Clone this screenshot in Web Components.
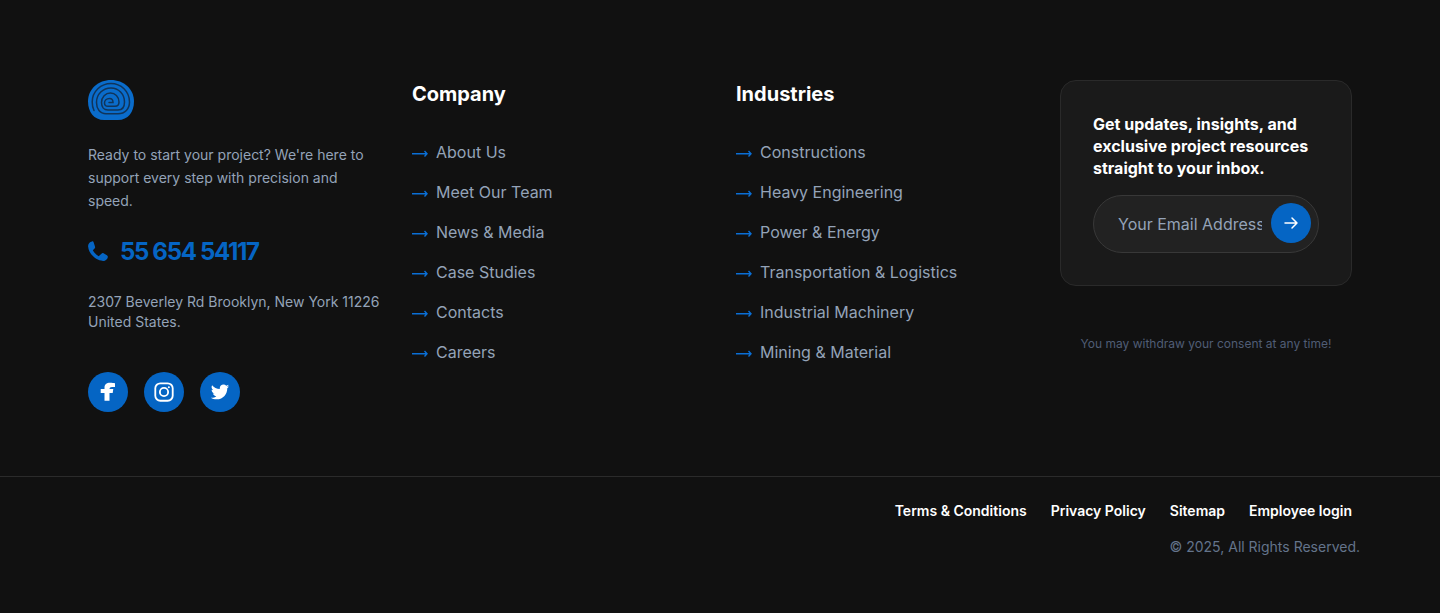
<!DOCTYPE html>
<html lang="en">
<head>
<meta charset="UTF-8">
<title>Footer</title>
<style>
  html, body { margin: 0; background: #111111; }
  body { font-family: Inter, "Liberation Sans", sans-serif; }
</style>
</head>
<body>
<site-footer>
  <footer-about slot="about"></footer-about>
  <link-list slot="company" heading="Company" items="About Us|Meet Our Team|News &amp; Media|Case Studies|Contacts|Careers"></link-list>
  <link-list slot="industries" heading="Industries" items="Constructions|Heavy Engineering|Power &amp; Energy|Transportation &amp; Logistics|Industrial Machinery|Mining &amp; Material"></link-list>
  <subscribe-card slot="subscribe"></subscribe-card>
  <footer-bottom slot="bottom"></footer-bottom>
</site-footer>

<template id="site-footer">
  <style>
    :host { display: block; height: 613px; background: #111111; box-sizing: border-box; padding-top: 80px; overflow: hidden; }
    .cols { display: grid; grid-template-columns: repeat(4, 292px); column-gap: 32px; padding: 0 88px; height: 396px; }
    .bottom { border-top: 1px solid #2b2b2b; }
  </style>
  <div class="cols">
    <slot name="about"></slot>
    <slot name="company"></slot>
    <slot name="industries"></slot>
    <slot name="subscribe"></slot>
  </div>
  <div class="bottom"><slot name="bottom"></slot></div>
</template>

<template id="footer-about">
  <style>
    :host { display: block; }
    svg { display: block; }
    .logo { width: 46px; height: 40px; }
    p { margin: 0; }
    .intro { margin-top: 23px; font-size: 14px; line-height: 23px; color: #94a3b8; }
    .phone { display: flex; align-items: center; gap: 11px; margin-top: 21px; height: 36px; color: #0565c4; }
    .phone svg { width: 22px; height: 22px; margin-left: -1px; fill: currentColor; }
    .phone span { font-size: 24px; font-weight: 700; letter-spacing: -1.33px; }
    .addr { margin-top: 23px; font-size: 14px; line-height: 20px; color: #94a3b8; }
    .social { display: flex; gap: 16px; margin-top: 40px; }
    .social a { width: 40px; height: 40px; border-radius: 50%; background: #0565c4; display: flex; align-items: center; justify-content: center; }
    .fb { width: 24px; height: 24px; }
    .ig { width: 22px; height: 22px; }
    .tw { width: 20px; height: 20px; }
  </style>
  <svg class="logo" viewBox="0 0 46 40">
    <path fill="#0a6ccb" d="M23 0C10.300 0 0 9 0 21.500C0 32 6 40 16 40H30C40 40 46 32 46 21.500C46 9 35.700 0 23 0Z"/>
    <path fill="none" stroke="#10345a" stroke-width="1.500" stroke-linecap="round" d="M21 22.500H25C25 20 23.500 18.500 21.500 18.500C18.500 18.500 16.500 20.500 16.500 23C16.500 25 18 26.300 20 26.300H27C29.500 26.300 31 24.500 31 22C31 16.500 27 13 22.500 13C17.500 13 13.500 17 13.500 22.500C13.500 27 16 30 20 30H30C34 30 36.500 27 36.500 22C36.500 14 30.500 8 23 8C15 8 8.500 14 8.500 22.500C8.500 29 12 33.800 18 33.800H30C37 33.800 41.500 29 41.500 22C41.500 11.500 33 3.500 23 3.500C13 3.500 4.200 11.500 4.200 22C4.200 25 4.800 28 6 30.500"/>
  </svg>
  <p class="intro">Ready to start your project? We're here to support every step with precision and speed.</p>
  <div class="phone">
    <svg viewBox="0 0 24 24"><path d="M5.500 1.500C3 2 1 4 1.200 7C2 15 9 22 17.500 22.800C20 23 22.200 21 22.700 18.800C22.900 17.800 22.500 17 21.700 16.500L18 14.500C17.200 14.100 16.400 14.300 15.800 14.900L12.800 17.600C10.300 16.300 7.700 13.700 6.400 11.200L8.300 9.300C8.900 8.700 9.100 8 8.700 7.200L7.300 2.800C7 1.800 6.500 1.300 5.500 1.500Z"/></svg>
    <span>55 654 54117</span>
  </div>
  <p class="addr">2307 Beverley Rd Brooklyn, New York 11226<br>United States.</p>
  <div class="social">
    <a href="#" aria-label="Facebook"><svg class="fb" viewBox="0 0 24 24" fill="#fff"><path d="M8.500 20.700V13H4.700V9H8.500V7.500C8.500 4.500 10.500 2.700 14 2.700C16 2.700 17.800 2.900 19 3.200V7H16C14.300 7 13.500 7.700 13.500 9H17.300L16.700 13H13.500V20.700Z"/></svg></a>
    <a href="#" aria-label="Instagram"><svg class="ig" viewBox="0 0 24 24" fill="none" stroke="#fff" stroke-width="2"><rect x="2.500" y="2.500" width="19" height="19" rx="5.500"/><circle cx="12" cy="12" r="4.500"/><circle cx="17.300" cy="6.700" r="1.100" fill="#fff" stroke="none"/></svg></a>
    <a href="#" aria-label="Twitter"><svg class="tw" viewBox="0 0 24 24" fill="#fff"><path d="M23 5.100C22.200 5.500 21.300 5.700 20.400 5.800 21.300 5.200 22 4.400 22.400 3.300 21.500 3.800 20.500 4.200 19.500 4.400 18.700 3.500 17.500 3 16.200 3 13.700 3 11.700 5 11.700 7.500 11.700 7.900 11.700 8.200 11.800 8.500 8 8.300 4.700 6.500 2.500 3.800 2.100 4.500 1.900 5.200 1.900 6.100 1.900 7.600 2.700 9 3.900 9.800 3.200 9.800 2.500 9.600 1.900 9.300V9.300C1.900 11.500 3.500 13.300 5.500 13.700 5.100 13.800 4.800 13.900 4.300 13.900 4 13.900 3.700 13.900 3.400 13.800 4 15.600 5.700 16.900 7.600 17 6.100 18.200 4.100 18.900 2 18.900 1.600 18.900 1.300 18.900 1 18.800 3 20.100 5.300 20.800 7.900 20.800 16.200 20.800 20.700 13.900 20.700 8 20.700 7.800 20.700 7.600 20.700 7.400 21.600 6.800 22.400 6 23 5.100Z"/></svg></a>
  </div>
</template>

<template id="link-list">
  <style>
    :host { display: block; }
    h4 { margin: 0; font-size: 20px; line-height: 28px; font-weight: 700; color: #ffffff; }
    ul { list-style: none; margin: 32px 0 0; padding: 0; display: flex; flex-direction: column; gap: 16px; }
    li { display: flex; align-items: center; gap: 8px; height: 24px; font-size: 16px; color: #94a3b8; }
    svg { width: 16px; height: 8px; flex: none; margin-top: 4px; }
  </style>
  <h4></h4>
  <ul></ul>
</template>

<template id="subscribe-card">
  <style>
    :host { display: block; }
    .card { box-sizing: border-box; height: 206px; padding: 32px; background: #1a1a1a; border: 1px solid #2a2a2a; border-radius: 16px; }
    h5 { margin: 0; font-size: 16px; line-height: 22px; font-weight: 700; color: #ffffff; }
    form { box-sizing: border-box; height: 58px; margin-top: 16px; padding: 7px 7px 7px 24px; display: flex; align-items: center; gap: 9px; background: #222222; border: 1px solid #383838; border-radius: 29px; }
    input { flex: 1; min-width: 0; padding: 0; border: 0; outline: 0; background: none; font: 16px Inter, "Liberation Sans", sans-serif; color: #fff; }
    input::placeholder { color: #94a3b8; opacity: 1; }
    button { align-self: flex-start; width: 40px; height: 40px; flex: none; padding: 0; border: 0; border-radius: 50%; background: #0565c4; display: flex; align-items: center; justify-content: center; }
    svg { width: 16px; height: 16px; }
    p { margin: 50px 0 0; text-align: center; font-size: 12px; line-height: 16px; color: #505d75; }
  </style>
  <div class="card">
    <h5>Get updates, insights, and exclusive project resources straight to your inbox.</h5>
    <form>
      <input type="text" placeholder="Your Email Address">
      <button type="button" aria-label="Subscribe"><svg viewBox="0 0 16 16" fill="none" stroke="#fff" stroke-width="1.500" stroke-linecap="round" stroke-linejoin="round"><path d="M2 8H14M9 3L14 8L9 13"/></svg></button>
    </form>
  </div>
  <p>You may withdraw your consent at any time!</p>
</template>

<template id="footer-bottom">
  <style>
    :host { display: block; padding: 24px 88px 0; }
    nav { display: flex; justify-content: flex-end; gap: 24px; font-size: 14px; line-height: 20px; font-weight: 600; }
    a { color: #ffffff; text-decoration: none; }
    p { margin: 16px -8px 0 0; text-align: right; font-size: 14px; line-height: 20px; color: #64748b; }
  </style>
  <nav>
    <a href="#">Terms &amp; Conditions</a>
    <a href="#">Privacy Policy</a>
    <a href="#">Sitemap</a>
    <a href="#">Employee login</a>
  </nav>
  <p>© 2025, All Rights Reserved.</p>
</template>

<script>
  // every element just clones its template into an open shadow root
  function stamp(el, id) {
    const root = el.attachShadow({ mode: 'open' });
    root.appendChild(document.getElementById(id).content.cloneNode(true));
    return root;
  }

  class SiteFooter extends HTMLElement {
    constructor() { super(); stamp(this, 'site-footer'); }
  }
  class FooterAbout extends HTMLElement {
    constructor() { super(); stamp(this, 'footer-about'); }
  }
  class SubscribeCard extends HTMLElement {
    constructor() { super(); stamp(this, 'subscribe-card'); }
  }
  class FooterBottom extends HTMLElement {
    constructor() { super(); stamp(this, 'footer-bottom'); }
  }
  class LinkList extends HTMLElement {
    connectedCallback() {
      const root = this.shadowRoot || stamp(this, 'link-list');
      root.querySelector('h4').textContent = this.getAttribute('heading');
      const ul = root.querySelector('ul');
      ul.innerHTML = '';
      this.getAttribute('items').split('|').forEach(text => {
        const li = document.createElement('li');
        li.innerHTML = '<svg viewBox="0 0 16 8" fill="none" stroke="#0a6fd6" stroke-width="1.400"><path d="M0 3.700H15M12.500 1L15 3.700L12.500 6.400"/></svg>';
        li.appendChild(document.createTextNode(text));
        ul.appendChild(li);
      });
    }
  }

  customElements.define('site-footer', SiteFooter);
  customElements.define('footer-about', FooterAbout);
  customElements.define('subscribe-card', SubscribeCard);
  customElements.define('footer-bottom', FooterBottom);
  customElements.define('link-list', LinkList);
</script>
</body>
</html>
